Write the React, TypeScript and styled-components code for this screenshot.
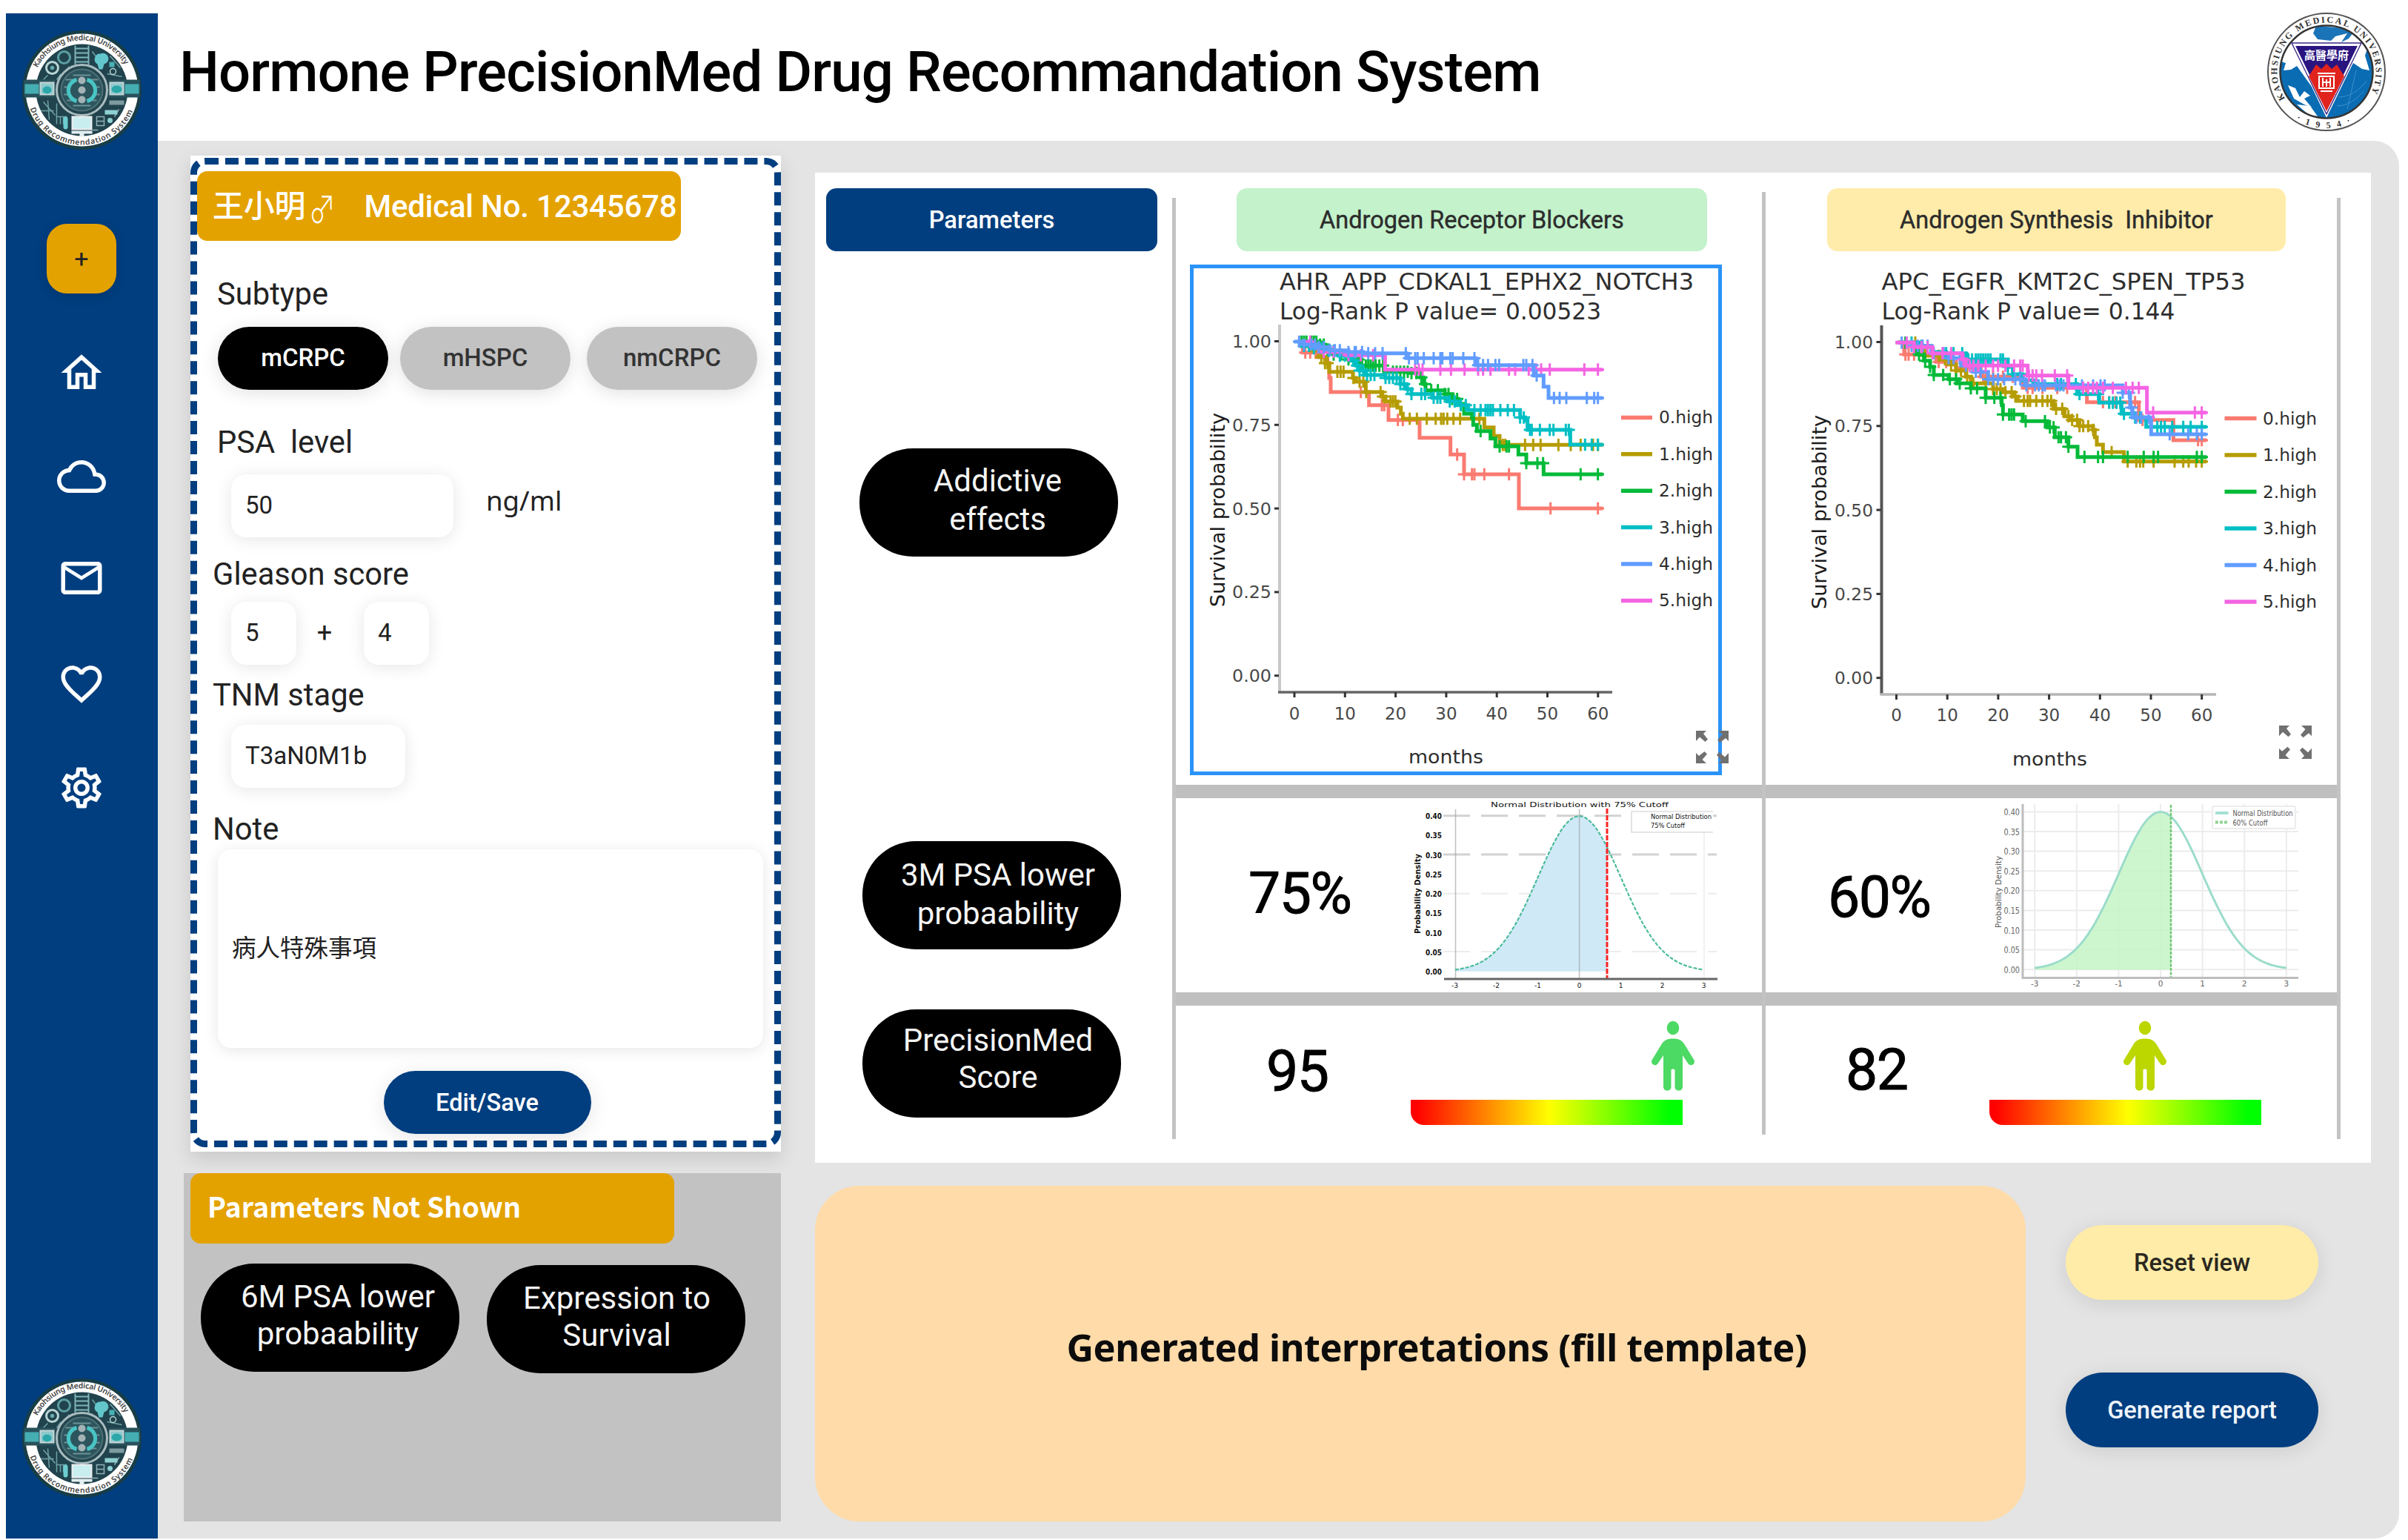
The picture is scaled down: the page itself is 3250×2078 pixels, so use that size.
import React from "react";
import styled, { createGlobalStyle } from "styled-components";
import {
  MdOutlineHome,
  MdOutlineCloud,
  MdMailOutline,
  MdFavoriteBorder,
  MdOutlineSettings,
} from "react-icons/md";

const navy = "#003e7f";
const amber = "#e4a200";
const grey = "#c2c2c2";
const roboto = `Roboto, "Noto Sans CJK TC", sans-serif`;
const noto = `"Noto Sans", "Noto Sans CJK TC", sans-serif`;

const GlobalStyle = createGlobalStyle`
  * { box-sizing: border-box; }
  body { margin: 0; background: #fff; font-family: ${roboto}; color: #222; }
  button, input { font-family: inherit; border: 0; padding: 0; }
`;

const Page = styled.div`
  width: 3250px;
  height: 2078px;
  padding: 18px 12px 2px 8px;
  display: flex;
  overflow: hidden;
`;

const Sidebar = styled.nav`
  width: 205px;
  height: 2058px;
  background: ${navy};
  display: flex;
  flex-direction: column;
  align-items: center;
  padding: 22px 0 54px;
`;

const AddButton = styled.button`
  margin: 99px 1px 0 0;
  width: 94px;
  height: 94px;
  border-radius: 27px;
  background: ${amber};
  font-size: 34px;
  line-height: 90px;
  color: #222;
  box-shadow: 0 4px 16px rgba(0, 0, 0, 0.12);
`;

const NavIcons = styled.div`
  flex: 1;
  display: flex;
  flex-direction: column;
  align-items: center;
  padding: 74px 2px 0 0;
  gap: 74px;
  color: #fff;
  svg {
    width: 66px;
    height: 66px;
  }
  svg:nth-child(3) {
    margin: -3px 0 3px;
  }
`;

const Main = styled.div`
  width: 3025px;
  display: flex;
  flex-direction: column;
`;

const Header = styled.header`
  height: 172px;
  display: flex;
  justify-content: space-between;
  padding: 0 16px 0 29px;
  & > svg {
    margin-top: -3px;
  }
`;

const Title = styled.h1`
  margin: 33px 0 0;
  font-size: 76px;
  line-height: 92px;
  font-weight: 500;
  letter-spacing: -0.85px;
  color: #000;
  white-space: nowrap;
`;

const Workspace = styled.div`
  height: 1886px;
  border-radius: 0 34px 34px 0;
  background: #e4e4e4;
  display: flex;
  padding: 20px 38px 23px 35px;
`;

const LeftColumn = styled.div`
  width: 806px;
  display: flex;
  flex-direction: column;
  justify-content: space-between;
`;

const Card = styled.section`
  margin-left: 9px;
  width: 797px;
  height: 1344px;
  padding: 3px 0 6px;
  background: #fff;
  box-shadow: 0 10px 24px rgba(0, 0, 0, 0.12);
`;

const CardBody = styled.div`
  height: 1335px;
  border: 9px dashed ${navy};
  border-radius: 20px;
  display: flex;
  flex-direction: column;
  align-items: flex-start;
`;

const Badge = styled.div`
  width: 653px;
  height: 94px;
  border-radius: 14px;
  background: ${amber};
  color: #fff;
  display: flex;
  align-items: center;
  white-space: nowrap;
`;

const PatientBadge = styled(Badge)`
  margin-top: 9px;
  padding: 2px 0 0 21px;
  font-size: 42px;
  font-weight: 500;
  line-height: 48px;
  letter-spacing: -0.2px;
`;

const Sex = styled.span`
  width: 40px;
  margin: 2px 37px 0 2px;
  font-family: "Noto Sans CJK TC", sans-serif;
  font-weight: 300;
  text-align: center;
  transform: scale(0.86, 1.18);
`;

const FieldLabel = styled.div<{ $top: number; $left?: number }>`
  margin-top: ${(p) => p.$top}px;
  margin-left: ${(p) => p.$left ?? 21}px;
  font-size: 41.7px;
  line-height: 48px;
  white-space: pre;
`;

const Row = styled.div<{ $top: number; $left: number }>`
  margin-top: ${(p) => p.$top}px;
  margin-left: ${(p) => p.$left}px;
  height: 85px;
  display: flex;
  align-items: center;
`;

const Chip = styled.button<{ $active?: boolean; $gap?: number }>`
  width: 230px;
  height: 85px;
  margin-left: ${(p) => p.$gap ?? 0}px;
  padding-bottom: 2px;
  border-radius: 43px;
  background: ${(p) => (p.$active ? "#000" : grey)};
  color: ${(p) => (p.$active ? "#fff" : "#333")};
  font-size: 33px;
  font-weight: 500;
  box-shadow: 0 4px 24px rgba(0, 0, 0, 0.12);
`;

const Input = styled.div<{ $w: number }>`
  width: ${(p) => p.$w}px;
  height: 85px;
  padding-left: 19px;
  border-radius: 20px;
  background: #fff;
  font-size: 33px;
  line-height: 84px;
  box-shadow: 0 3px 22px rgba(0, 0, 0, 0.1);
`;

const Unit = styled.span`
  margin: 0 0 16px 44px;
  font-family: ${noto};
  font-size: 36.6px;
  line-height: 48px;
`;

const Plus = styled.span`
  width: 76px;
  margin-right: 15px;
  text-align: center;
  font-size: 36px;
  line-height: 77px;
`;

const NoteBox = styled.div`
  margin: 3px 0 0 28px;
  width: 736px;
  height: 268px;
  padding-left: 19px;
  border-radius: 18px;
  box-shadow: 0 3px 20px rgba(0, 0, 0, 0.1);
  font-size: 32.5px;
  line-height: 268px;
`;

const ActionButton = styled.button<{ $w: number; $h: number; $bg: string; $fg: string }>`
  width: ${(p) => p.$w}px;
  height: ${(p) => p.$h}px;
  padding-top: 1px;
  border-radius: ${(p) => p.$h / 2}px;
  background: ${(p) => p.$bg};
  color: ${(p) => p.$fg};
  font-size: 32.6px;
  font-weight: 500;
  box-shadow: 0 5px 28px rgba(0, 0, 0, 0.1);
`;

const SaveRow = styled.div`
  align-self: center;
  margin: 31px 0 0 4px;
`;

const HiddenPanel = styled.section`
  height: 470px;
  background: ${grey};
  padding-left: 9px;
`;

const HiddenBadge = styled(Badge)`
  height: 95px;
  padding: 0 0 8px 23px;
  font-family: "Noto Sans CJK TC", sans-serif;
  font-size: 37.6px;
  font-weight: 700;
`;

const HiddenPills = styled.div`
  display: flex;
  gap: 37px;
  margin: 27px 0 0 14px;
`;

const Pill = styled.div<{ $top?: number; $left?: number; $shift?: number; $lift?: number; $lh?: number }>`
  width: 349px;
  height: 146px;
  margin-top: ${(p) => p.$top ?? 0}px;
  margin-left: ${(p) => p.$left ?? 0}px;
  padding: ${(p) => p.$lift ?? 20}px 0 0 ${(p) => p.$shift ?? 0}px;
  border-radius: 72px;
  background: #000;
  color: #f5f5f5;
  font-size: 42px;
  line-height: ${(p) => p.$lh ?? 50}px;
  text-align: center;
  white-space: pre;
`;

const RightColumn = styled.div`
  width: 2101px;
  margin: 23px 0 0 46px;
  display: flex;
  flex-direction: column;
  justify-content: space-between;
`;

const Matrix = styled.section`
  height: 1336px;
  background: #fff;
  display: flex;
`;

const ParamColumn = styled.div`
  width: 482px;
  padding: 21px 0 0 15px;
`;

const HeadCell = styled.div<{ $w: number; $bg: string; $fg?: string }>`
  width: ${(p) => p.$w}px;
  height: 85px;
  border-radius: 14px;
  background: ${(p) => p.$bg};
  color: ${(p) => p.$fg ?? "#2c2c2c"};
  font-size: ${(p) => (p.$fg ? 32.7 : 32.5)}px;
  font-weight: ${(p) => (p.$fg ? 500 : 400)};
  -webkit-text-stroke: ${(p) => (p.$fg ? 0 : 0.4)}px currentColor;
  line-height: 86px;
  text-align: center;
  white-space: pre;
`;

const Rule = styled.div<{ $top: number; $bottom: number }>`
  width: 5px;
  margin: ${(p) => p.$top}px 0 ${(p) => p.$bottom}px;
  background: #c3c3c3;
`;

const DrugColumn = styled.div<{ $w: number }>`
  width: ${(p) => p.$w}px;
  display: flex;
  flex-direction: column;
  padding-top: 21px;
`;

const HeadSlot = styled.div<{ $left: number }>`
  padding-left: ${(p) => p.$left}px;
  height: 103px;
`;

const ChartFrame = styled.div<{ $left: number; $selected?: boolean }>`
  width: 718px;
  height: 689px;
  margin-left: ${(p) => p.$left}px;
  border: 5px solid ${(p) => (p.$selected ? "#2b93f8" : "transparent")};
  svg {
    display: block;
    overflow: visible;
  }
`;

const Divider = styled.div<{ $top?: number }>`
  height: 18px;
  margin-top: ${(p) => p.$top ?? 0}px;
  background: #bfbfbf;
`;

const ProbabilityRow = styled.div`
  height: 262px;
  display: flex;
  justify-content: space-between;
  overflow: hidden;
`;

const DensitySlot = styled.div<{ $right: number }>`
  width: 430px;
  margin-right: ${(p) => p.$right}px;
`;

const Figure = styled.div<{ $left: number; $top: number }>`
  margin: ${(p) => p.$top}px 0 0 ${(p) => p.$left}px;
  height: 90px;
  font-size: 77px;
  line-height: 90px;
  letter-spacing: -1.5px;
  color: #000;
  -webkit-text-stroke: 1px #000;
`;

const ScoreRow = styled.div`
  height: 190px;
  display: flex;
`;

const Gauge = styled.div<{ $left: number }>`
  margin-left: ${(p) => p.$left}px;
  width: 367px;
  padding-top: 21px;
`;

const Marker = styled.div<{ $offset: number }>`
  height: 106px;
  padding-left: ${(p) => p.$offset}px;
  svg {
    display: block;
    overflow: visible;
  }
`;

const GaugeBar = styled.div`
  height: 34px;
  border-bottom-left-radius: 18px;
  background: linear-gradient(90deg, #f00 2%, #ff0 51%, #0f0 95%);
`;

const BottomRow = styled.div`
  display: flex;
  height: 453px;
`;

const Interpretation = styled.div`
  width: 1634px;
  height: 453px;
  border-radius: 60px;
  background: #ffdba9;
  display: flex;
  align-items: center;
  justify-content: center;
  padding: 0 0 18px 44px;
  font-family: ${noto};
  font-weight: 700;
  font-size: 50.5px;
  letter-spacing: -0.5px;
  color: #0c0c0c;
  white-space: nowrap;
`;

const Actions = styled.div`
  margin: 53px 0 0 54px;
  display: flex;
  flex-direction: column;
  gap: 98px;
`;

type Step = [number, number];
type Curve = { color: string; start: Step; steps: Step[]; ticks: number[] };

const colors = ["#fb7a70", "#b59c00", "#00ba38", "#00bfc4", "#619cff", "#f564e3"];

const blockerCurves: Curve[] = [
  {
    color: colors[0],
    start: [95, 93],
    steps: [[115, 137], [170, 155], [215, 180], [222, 240], [228, 297], [383, 350], [462, 410], [588, 482], [713, 550], [768, 630], [990, 768]],
    ticks: [125, 145, 350, 435, 445, 500, 520, 740, 768, 800, 810, 850, 950, 1118, 1310],
  },
  {
    color: colors[1],
    start: [95, 93],
    steps: [[110, 110], [150, 130], [180, 155], [205, 180], [222, 215], [318, 240], [330, 255], [370, 297], [435, 315], [450, 335], [498, 360], [512, 385], [520, 405], [850, 440], [888, 475], [912, 500], [925, 511]],
    ticks: [190, 205, 215, 255, 268, 280, 320, 345, 360, 372, 430, 440, 470, 480, 490, 548, 577, 617, 653, 675, 685, 700, 725, 752, 830, 925, 935, 1015, 1048, 1078, 1150, 1200, 1240, 1290, 1310],
  },
  {
    color: colors[2],
    start: [95, 93],
    steps: [[175, 105], [205, 125], [240, 145], [300, 165], [350, 190], [445, 215], [545, 220], [590, 238], [603, 265], [612, 290], [690, 305], [720, 325], [745, 345], [768, 385], [800, 400], [805, 430], [820, 455], [875, 485], [895, 517], [988, 550], [1020, 585], [1090, 630]],
    ticks: [110, 120, 130, 150, 160, 170, 185, 200, 215, 240, 270, 300, 320, 340, 355, 370, 380, 390, 400, 410, 425, 440, 480, 495, 510, 525, 540, 555, 575, 595, 610, 635, 662, 690, 705, 720, 740, 755, 835, 912, 940, 950, 1020, 1065, 1088, 1240, 1310],
  },
  {
    color: colors[3],
    start: [95, 93],
    steps: [[110, 110], [150, 120], [210, 130], [260, 150], [310, 170], [330, 190], [345, 210], [370, 228], [450, 240], [510, 265], [535, 285], [555, 305], [640, 320], [700, 335], [740, 350], [785, 370], [995, 400], [1015, 412], [1025, 450], [1198, 510]],
    ticks: [120, 140, 160, 190, 220, 240, 265, 285, 300, 320, 335, 345, 360, 375, 390, 405, 450, 465, 480, 495, 510, 525, 540, 555, 595, 610, 645, 660, 672, 710, 730, 755, 775, 810, 835, 855, 865, 875, 885, 915, 945, 970, 995, 1010, 1035, 1042, 1075, 1115, 1130, 1180, 1192, 1258, 1285, 1310],
  },
  {
    color: colors[5],
    start: [95, 93],
    steps: [[150, 110], [180, 135], [290, 148], [448, 206]],
    ticks: [145, 200, 240, 300, 350, 400, 570, 585, 600, 672, 715, 770, 825, 845, 875, 950, 975, 1030, 1060, 1080, 1115, 1255, 1310],
  },
  {
    color: colors[4],
    start: [80, 93],
    steps: [[120, 105], [170, 115], [225, 128], [300, 135], [360, 140], [535, 160], [815, 188], [1050, 230], [1090, 275], [1110, 321]],
    ticks: [100, 120, 150, 165, 180, 200, 225, 245, 265, 300, 325, 330, 355, 380, 408, 438, 532, 545, 570, 580, 605, 645, 672, 680, 712, 722, 765, 810, 825, 845, 865, 895, 910, 1008, 1020, 1045, 1062, 1132, 1155, 1182, 1265, 1295, 1310],
  },
];

const inhibitorCurves: Curve[] = [
  {
    color: colors[0],
    start: [95, 97],
    steps: [[120, 145], [250, 175], [330, 200], [430, 235], [600, 280], [860, 338], [1070, 410], [1210, 492]],
    ticks: [125, 138, 160, 205, 260, 290, 350, 440, 450, 480, 520, 560, 620, 640, 680, 740, 780, 925, 950, 975, 1035, 1055, 1085, 1310, 1325],
  },
  {
    color: colors[1],
    start: [95, 97],
    steps: [[175, 110], [200, 150], [270, 165], [300, 185], [330, 210], [370, 235], [390, 262], [480, 285], [520, 298], [560, 315], [580, 333], [725, 365], [770, 395], [790, 410], [830, 435], [885, 450], [892, 480], [900, 510], [925, 540], [1010, 578]],
    ticks: [130, 165, 205, 260, 285, 310, 330, 350, 375, 400, 450, 480, 495, 510, 530, 555, 570, 605, 620, 630, 655, 680, 700, 715, 735, 760, 785, 800, 820, 830, 845, 865, 885, 960, 1025, 1060, 1075, 1088, 1130, 1215, 1250, 1272, 1302, 1325],
  },
  {
    color: colors[2],
    start: [95, 97],
    steps: [[170, 145], [200, 170], [225, 195], [240, 228], [300, 245], [340, 262], [390, 282], [450, 320], [515, 350], [520, 388], [600, 415], [700, 440], [730, 480], [785, 518], [822, 560]],
    ticks: [125, 180, 205, 225, 240, 278, 305, 330, 345, 390, 415, 450, 485, 510, 520, 545, 555, 565, 612, 690, 710, 725, 745, 755, 775, 785, 850, 905, 925, 1025, 1090, 1130, 1148, 1305, 1325],
  },
  {
    color: colors[3],
    start: [95, 97],
    steps: [[180, 110], [230, 135], [290, 140], [370, 165], [540, 195], [560, 225], [600, 250], [650, 265], [820, 305], [910, 340], [1000, 385], [1050, 400], [1100, 438]],
    ticks: [150, 190, 290, 320, 355, 380, 395, 410, 420, 430, 440, 450, 460, 470, 510, 520, 540, 560, 590, 640, 740, 755, 815, 830, 905, 950, 965, 980, 995, 1010, 1055, 1075, 1145, 1160, 1175, 1205, 1250, 1280, 1325],
  },
  {
    color: colors[4],
    start: [95, 97],
    steps: [[150, 110], [230, 140], [300, 160], [350, 190], [400, 215], [460, 245], [610, 270], [1005, 300], [1035, 360], [1045, 400], [1120, 468]],
    ticks: [110, 130, 150, 175, 195, 215, 240, 280, 300, 320, 345, 370, 410, 430, 460, 480, 500, 525, 570, 590, 615, 650, 665, 680, 690, 735, 750, 765, 840, 885, 915, 932, 1005, 1030, 1040, 1060, 1080, 1110, 1195, 1270, 1305, 1325],
  },
  {
    color: colors[5],
    start: [85, 97],
    steps: [[160, 115], [235, 140], [355, 165], [370, 190], [620, 230], [785, 280], [1103, 380]],
    ticks: [130, 160, 190, 215, 235, 275, 310, 360, 385, 400, 420, 450, 480, 500, 530, 565, 590, 600, 625, 640, 655, 678, 730, 780, 845, 865, 885, 900, 925, 965, 1018, 1045, 1070, 1128, 1297, 1325],
  },
];

function curvePath(c: Curve, end: number) {
  let d = `M${c.start[0]} ${c.start[1]}`;
  c.steps.forEach(([x, y]) => (d += `H${x}V${y}`));
  return d + `H${end}`;
}

function tickPath(c: Curve) {
  return c.ticks
    .map((x) => {
      let y = c.start[1];
      c.steps.forEach(([sx, sy]) => {
        if (x >= sx) y = sy;
      });
      return `M${x} ${y - 25}V${y + 25}M${x - 25} ${y}H${x + 25}`;
    })
    .join("");
}

type SurvivalProps = {
  view: string;
  title: string;
  titleWidth: number;
  subtitle: string;
  subtitleWidth: number;
  axisX: number;
  axisTop: number;
  axisY: number;
  axisRight: number;
  axisColors: [string, string];
  x0: number;
  dx: number;
  y0: number;
  dy: number;
  tickBase: number;
  labelLeft: number;
  labelWidth: number;
  months: [number, number, number];
  yLabel: [number, number, number];
  legend: { x: number; w: number; y: number; dy: number; tx: number; tw: number };
  origin: [number, number];
  curveEnd: number;
  curves: Curve[];
  expand: [number, number, number, number];
};

function SurvivalChart(p: SurvivalProps) {
  return (
    <svg width={708} height={679} viewBox={p.view} fontFamily='"DejaVu Sans", sans-serif' fill="#2e2e2e">
      <text x={p.axisX} y={391} fontSize={32} textLength={p.titleWidth} lengthAdjust="spacingAndGlyphs">{p.title}</text>
      <text x={p.axisX} y={431} fontSize={32} textLength={p.subtitleWidth} lengthAdjust="spacingAndGlyphs">{p.subtitle}</text>
      <path d={`M${p.axisX} ${p.axisTop}V${p.axisY}`} stroke={p.axisColors[0]} strokeWidth={4} />
      <path d={`M${p.axisX - 2} ${p.axisY}H${p.axisRight}`} stroke={p.axisColors[1]} strokeWidth={3.5} />
      {["1.00", "0.75", "0.50", "0.25", "0.00"].map((t, i) => {
        const y = p.y0 + p.dy * i;
        return (
          <g key={t}>
            <path d={`M${p.axisX - 7} ${y}h6`} stroke="#333" strokeWidth={3} />
            <text x={p.labelLeft} y={y + 8.5} fontSize={23.5} fill="#484848" textLength={p.labelWidth} lengthAdjust="spacingAndGlyphs">{t}</text>
          </g>
        );
      })}
      {[0, 10, 20, 30, 40, 50, 60].map((t, i) => {
        const x = p.x0 + p.dx * i;
        return (
          <g key={t}>
            <path d={`M${x} ${p.axisY}v7`} stroke="#333" strokeWidth={3} />
            <text x={x} y={p.tickBase} fontSize={23} fill="#484848" textAnchor="middle">{t}</text>
          </g>
        );
      })}
      <text x={p.months[0]} y={p.months[1]} fontSize={25} textLength={p.months[2]} lengthAdjust="spacingAndGlyphs">months</text>
      <text transform={`translate(${p.yLabel[0]} ${p.yLabel[1]}) rotate(-90)`} fontSize={26} fill="#1c1c1c" textLength={p.yLabel[2]} lengthAdjust="spacingAndGlyphs">Survival probability</text>
      <g transform={`translate(${p.origin[0]} ${p.origin[1]}) scale(0.33333)`} fill="none">
        {p.curves.map((c) => (
          <g key={c.color} stroke={c.color}>
            <path d={curvePath(c, p.curveEnd)} strokeWidth={15} />
            <path d={tickPath(c)} strokeWidth={9} />
          </g>
        ))}
      </g>
      {colors.map((c, i) => (
        <g key={c}>
          <path d={`M${p.legend.x} ${p.legend.y + p.legend.dy * i}h${p.legend.w}`} stroke={c} strokeWidth={5.5} />
          <text x={p.legend.tx} y={p.legend.y + p.legend.dy * i + 8} fontSize={23.5} textLength={p.legend.tw} lengthAdjust="spacingAndGlyphs">{`${i}.high`}</text>
        </g>
      ))}
      <svg x={p.expand[0]} y={p.expand[1]} width={p.expand[2]} height={p.expand[3]} viewBox="0 0 44 44" preserveAspectRatio="none">
        <g fill="#707070">
          {[0, 90, 180, 270].map((a) => (
            <path key={a} transform={`rotate(${a} 22 22)`} d="M0 0H14L10 4L16 11.5L12.500 15L5 8.500L0 14Z" />
          ))}
        </g>
      </svg>
    </svg>
  );
}

function bell(cx: number, base: number, height: number, sigma: number, from: number, to: number) {
  const pts: string[] = [];
  for (let i = 0; i <= 80; i++) {
    const z = from + ((to - from) * i) / 80;
    pts.push(`${(cx + z * sigma).toFixed(1)} ${(base - height * Math.exp((-z * z) / 2)).toFixed(1)}`);
  }
  return "M" + pts.join("L");
}

const densities = ["0.40", "0.35", "0.30", "0.25", "0.20", "0.15", "0.10", "0.05", "0.00"];

function BlockerDensity() {
  return (
    <svg width={430} height={262} viewBox="1900 1077 430 262" fontFamily='"DejaVu Sans", sans-serif' fill="#111">
      <text x={2012} y={1089} fontSize={9} textLength={240} lengthAdjust="spacingAndGlyphs">Normal Distribution with 75% Cutoff</text>
      {[1100.7, 1153, 1205.7, 1284].map((y, i) => (
        <path key={y} d={`M1948 ${y}H2317`} stroke={i < 2 ? "#d2d2d2" : "#ececec"} strokeWidth={i < 2 ? 3 : 2} strokeDasharray="36 15" />
      ))}
      <path d={bell(2131.6, 1310.7, 209.5, 55.9, -3, 0.674) + "V1310.7H1964Z"} fill="#cfe9f7" />
      <path d="M1964.5 1092V1321M2131.6 1092V1321" stroke="#999" strokeOpacity={0.6} strokeWidth={1.6} />
      <path d="M2300 1124V1321" stroke="#eee" strokeWidth={1.6} />
      <path d={bell(2131.6, 1310.7, 209.5, 55.9, -3, 3)} fill="none" stroke="#4dbb9c" strokeWidth={2.2} strokeDasharray="5 2" />
      <path d="M2169 1091V1321" stroke="#f22" strokeWidth={3} strokeDasharray="7 2" />
      <path d="M1949 1321H2318" stroke="#666" strokeWidth={3} />
      {densities.map((t, i) => (
        <text key={t} x={1924} y={1105 + 26.25 * i} fontSize={11} fontWeight={700} textLength={22} lengthAdjust="spacingAndGlyphs">{t}</text>
      ))}
      {[-3, -2, -1, 0, 1, 2, 3].map((t) => (
        <text key={t} x={2131.6 + t * 56} y={1333} fontSize={9} textAnchor="middle">{t}</text>
      ))}
      <text transform="translate(1917 1260) rotate(-90)" fontSize={11} fontWeight={700} textLength={108} lengthAdjust="spacingAndGlyphs">Probability Density</text>
      <path d="M2312 1095H2202V1123H2312" fill="#fff" stroke="#ddd" strokeWidth={1.6} />
      <text x={2228} y={1105} fontSize={9} textLength={82} lengthAdjust="spacingAndGlyphs">Normal Distribution</text>
      <text x={2228} y={1117} fontSize={9} textLength={46} lengthAdjust="spacingAndGlyphs">75% Cutoff</text>
    </svg>
  );
}

function InhibitorDensity() {
  return (
    <svg width={430} height={262} viewBox="2685 1077 430 262" fontFamily='"DejaVu Sans", sans-serif' fill="#555">
      {densities.map((t, i) => (
        <g key={t}>
          <path d={`M2730 ${1095.4 + 26.6 * i}H3102`} stroke="#ececec" strokeWidth={2} />
          <text x={2704.5} y={1100 + 26.6 * i} fontSize={12} fill="#666" textLength={21.5} lengthAdjust="spacingAndGlyphs">{t}</text>
        </g>
      ))}
      {[-3, -2, -1, 0, 1, 2, 3].map((t) => (
        <g key={t}>
          <path d={`M${2916 + 56.6 * t} 1085V1319`} stroke="#ececec" strokeWidth={2} />
          <text x={2916 + 56.6 * t} y={1331} fontSize={10.5} fill="#666" textAnchor="middle">{t}</text>
        </g>
      ))}
      <path d={bell(2916, 1308.5, 213, 56.6, -3, 0.25) + "V1308.5H2746Z"} fill="#c5f4c5" fillOpacity={0.85} />
      <path d={bell(2916, 1308.5, 213, 56.6, -3, 3)} fill="none" stroke="#9cdccb" strokeWidth={3} />
      <path d="M2930 1086V1319" stroke="#6fc878" strokeWidth={2.5} strokeDasharray="4 1.5" />
      <path d="M2730 1085V1319.5H3102" fill="none" stroke="#bdbdbd" strokeWidth={3} />
      <text transform="translate(2701 1252) rotate(-90)" fontSize={11} textLength={97} lengthAdjust="spacingAndGlyphs">Probability Density</text>
      <rect x={2986} y={1088} width={112} height={30} rx={2} fill="#fff" stroke="#ececec" strokeWidth={2} />
      <path d="M2990 1097H3007.5" stroke="#a6e0d4" strokeWidth={4} />
      <path d="M2990 1109.6H3007.5" stroke="#8fd496" strokeWidth={4} strokeDasharray="4 2" />
      <text x={3013.5} y={1101} fontSize={10} textLength={81} lengthAdjust="spacingAndGlyphs">Normal Distribution</text>
      <text x={3013.5} y={1113.5} fontSize={10} textLength={47} lengthAdjust="spacingAndGlyphs">60% Cutoff</text>
    </svg>
  );
}

function Person({ color }: { color: string }) {
  return (
    <svg width={58} height={94} viewBox="0 0 58 94" fill={color}>
      <ellipse cx={29} cy={9} rx={8.3} ry={9.2} />
      <path d="M29 23.5C37 23.5 42 26 45 32L57.5 52.5C59 56 56.5 59 53.5 59.3C51.5 59.5 50.5 58.5 49 56.5L42 46V88C42 91.5 40 93.5 37 93.5C33.5 93.5 31.5 92 31.5 88V66C31.5 64 26.5 64 26.5 66V88C26.5 92 24.5 93.5 21 93.5C18 93.5 16 91.5 16 88V46L9 56.5C7.5 58.5 6.5 59.5 4.5 59.3C1.5 59 -1 56 .5 52.5L13 32C16 26 21 23.5 29 23.5Z" />
    </svg>
  );
}

function UniversitySeal() {
  return (
    <svg width={164} height={164} viewBox="-82 -82 164 164">
      <defs>
        <clipPath id="globe"><circle r={62} /></clipPath>
        <path id="sealTop" d="M-56 36A66.600 66.600 0 1 1 56 36" />
        <path id="sealBottom" d="M-40 64.500A76 76 0 0 0 40 64.500" />
      </defs>
      <circle r={79} fill="#fff" stroke="#555" strokeWidth={2} />
      <g clipPath="url(#globe)">
        <circle r={62} fill="#fff" />
        <path d="M-14 -62L40 -58L30 -45L20 -40L28 -52L12 -48L6 -42L-12 -44L-18 -52Z" fill="#1b74b8" />
        <path d="M-62 -14L-55 -12L-58 -2L-48 -3L-40 -8L-20 20L0 62H-62Z" fill="#0a6cb3" />
        <path d="M0 62L30 0L36 -12L48 -4L58 -2L52 -22L56 -34L66 -20V62Z" fill="#0a6cb3" />
        <path d="M-52 18L-42 22L-36 34L-30 26L-22 32L-30 36L-20 48L-30 44L-44 36Z" fill="#fff" />
        <path d="M-40 44L-22 46L-12 60L-24 58Z" fill="#fff" />
        <path d="M16 34C30 34 44 26 54 12M14 46C28 46 40 38 50 26M40 -2L28 50" stroke="#3d8fca" fill="none" />
      </g>
      <circle r={62.5} fill="none" stroke="#333" strokeWidth={2.5} />
      <path d="M-47 -39H47L0 57Z" fill="#fff" stroke="#3b2a86" strokeWidth={1.5} strokeLinejoin="round" />
      <path d="M-43 -35H43L0 52Z" fill="#2a1580" />
      <path d="M-43 -35L-25 2L0 52L25 2L43 -35" fill="none" stroke="#fff" strokeWidth={2} />
      <path d="M-24 6L-14 -10L-7 -4L0 -11L7 -4L14 -10L24 6L0 53Z" fill="#e0241d" />
      <text x={0} y={-17} fontSize={15} fill="#fff" textAnchor="middle" fontFamily='"Noto Sans CJK TC", sans-serif' fontWeight={700}>高醫學府</text>
      <path d="M-12 2H12M-10 6V22H10V6ZM-5 8V20M5 8V20M0 10V20M-5 14H5M-8 26H8" fill="none" stroke="#fff" strokeWidth={2} />
      <g fontFamily='"Liberation Serif", serif' fontSize={12} fontWeight={700} fill="#333">
        <text><textPath href="#sealTop" textLength={276}>KAOHSIUNG MEDICAL UNIVERSITY</textPath></text>
        <text><textPath href="#sealBottom" startOffset="50%" textAnchor="middle" letterSpacing={9}>·1954·</textPath></text>
      </g>
    </svg>
  );
}

function SystemSeal({ id }: { id: string }) {
  return (
    <svg width={163} height={163} viewBox="-81.5 -81.5 163 163">
      <defs>
        <clipPath id={`${id}c`}><circle r={62} /></clipPath>
        <path id={`${id}t`} d="M-60 -30A67 67 0 0 1 60 -30" />
        <path id={`${id}b`} d="M-70 25A74.5 74.5 0 0 0 70 25" />
      </defs>
      <circle r={80.5} fill="#183d45" />
      <circle r={76} fill="#fff" />
      <circle r={62} fill="#21434d" />
      <g clipPath={`url(#${id}c)`} fill="none" stroke="#6fa3a6" strokeWidth={1.5}>
        <path d="M-9 -60V-34M9 -60V-34M-9 -56H9M-9 -50H9M-9 -44H9M-9 -38H9" stroke="#7fb5b8" strokeWidth={2} />
        <circle cx={-40} cy={-30} r={8} stroke="#b8d4d4" strokeWidth={3} />
        <circle cx={-40} cy={-30} r={2} fill="#4cc0c2" />
        <circle cx={-24} cy={-44} r={8} stroke="#5b9ea3" strokeWidth={3} />
        <path d="M-52 -14L-46 -20M-34 -14L-28 -22M-18 -32V-24M14 -52L20 -44M38 -46L52 -30M34 -22L54 -18" />
        <circle cx={42} cy={-25} r={4} stroke="#b8d4d4" />
        <rect x={37} y={-38} width={7} height={7} fill="#49b2b5" stroke="none" />
        <path d="M-52 16L-36 34M-46 14L-44 40M-56 28H-38M-34 18V46M-29 36V46M-25 36V46M-35 36H-20" />
        <path d="M20 36H30V48H20ZM20 42H30M14 54H22M44 36L50 26" stroke="#8fb0b2" />
        <rect x={31} y={27} width={17} height={6} fill="#8ed1d3" stroke="none" />
        <rect x={37} y={14} width={20} height={6} fill="#7d9ba0" stroke="none" />
        <circle cx={38} cy={41} r={3.5} fill="#8ed1d3" stroke="none" />
        <rect x={-25} y={36} width={6} height={17} rx={3} fill="#6ccdd0" stroke="none" />
      </g>
      <path d="M25 -49A7.5 7.5 0 1 1 30 -35L28 -28H23L21 -35A7.5 7.5 0 0 1 25 -49Z" fill="#62c6cb" />
      <path d="M-78 -14H-36V10H-78A80 80 0 0 1 -78 -14ZM78 -14H36V10H78A80 80 0 0 0 78 -14Z" fill="#28525c" />
      <path d="M-77 -8H-58V5H-77ZM77 -8H58V5H77Z" fill="#45aeb2" />
      <path d="M-56 -10H-38V6H-56ZM56 -10H38V6H56Z" fill="#8cc9cd" stroke="#c5d5d6" strokeWidth={2} />
      <ellipse cx={-47} cy={0} rx={6} ry={5} fill="#2ba7a9" />
      <ellipse cx={47} cy={-1} rx={7} ry={5} fill="#2ba7a9" />
      <circle r={34} fill="#24464e" stroke="#a9bcc0" strokeWidth={3} />
      <circle r={28} fill="#2d555d" stroke="#4e7076" strokeWidth={2} />
      <path d="M-22 -14H-10M-24 -4H-18M-24 6H-18M-20 14H-8M10 -14H22M18 -4H24M18 6H24M8 14H20M-12 -20H12M-12 21H12" stroke="#6d9297" strokeWidth={2} />
      <path d="M-7 -14A15 15 0 0 0 -7 15M7 -14A15 15 0 0 1 7 15" fill="none" stroke="#49c4c4" strokeWidth={5} />
      <circle cy={-13} r={5} fill="#a4b3b6" />
      <circle r={5} fill="#a4b3b6" />
      <circle cy={13} r={5} fill="#a4b3b6" />
      <rect x={-13} y={36} width={26} height={17} fill="#c9eef0" stroke="#eee" strokeWidth={2} />
      <path d="M-14 55H14V59H-14ZM-3 59H3V63H-3Z" fill="#e2eef0" />
      <g fontFamily='"Noto Sans", sans-serif' fontSize={10.5} fontWeight={600} fill="#444">
        <text><textPath href={`#${id}t`} textLength={144}>Kaohsiung Medical University</textPath></text>
        <text><textPath href={`#${id}b`} textLength={178}>Drug Recommendation System</textPath></text>
      </g>
    </svg>
  );
}

export default function App() {
  return (
    <>
      <GlobalStyle />
      <Page>
        <Sidebar>
          <SystemSeal id="top" />
          <AddButton>+</AddButton>
          <NavIcons>
            <MdOutlineHome />
            <MdOutlineCloud />
            <MdMailOutline />
            <MdFavoriteBorder />
            <MdOutlineSettings />
          </NavIcons>
          <SystemSeal id="foot" />
        </Sidebar>
        <Main>
          <Header>
            <Title>Hormone PrecisionMed Drug Recommandation System</Title>
            <UniversitySeal />
          </Header>
          <Workspace>
            <LeftColumn>
              <Card>
                <CardBody>
                  <PatientBadge>
                    王小明<Sex>♂</Sex>Medical No. 12345678
                  </PatientBadge>
                  <FieldLabel $top={48} $left={27}>Subtype</FieldLabel>
                  <Row $top={20} $left={28}>
                    <Chip $active>mCRPC</Chip>
                    <Chip $gap={16}>mHSPC</Chip>
                    <Chip $gap={22}>nmCRPC</Chip>
                  </Row>
                  <FieldLabel $top={47} $left={27}>{"PSA  level"}</FieldLabel>
                  <Row $top={19} $left={46}>
                    <Input $w={300}>50</Input>
                    <Unit>ng/ml</Unit>
                  </Row>
                  <FieldLabel $top={26}>Gleason score</FieldLabel>
                  <Row $top={13} $left={46}>
                    <Input $w={88}>5</Input>
                    <Plus>+</Plus>
                    <Input $w={88}>4</Input>
                  </Row>
                  <FieldLabel $top={17}>TNM stage</FieldLabel>
                  <Row $top={16} $left={46}>
                    <Input $w={235}>T3aN0M1b</Input>
                  </Row>
                  <FieldLabel $top={32}>Note</FieldLabel>
                  <NoteBox>病人特殊事項</NoteBox>
                  <SaveRow>
                    <ActionButton $w={280} $h={85} $bg={navy} $fg="#fff">Edit/Save</ActionButton>
                  </SaveRow>
                </CardBody>
              </Card>
              <HiddenPanel>
                <HiddenBadge>Parameters Not Shown</HiddenBadge>
                <HiddenPills>
                  <Pill $shift={21}>{"6M PSA lower\nprobaability"}</Pill>
                  <Pill $top={2} $shift={2}>{"Expression to\nSurvival"}</Pill>
                </HiddenPills>
              </HiddenPanel>
            </LeftColumn>
            <RightColumn>
              <Matrix>
                <ParamColumn>
                  <HeadCell $w={447} $bg={navy} $fg="#fff">Parameters</HeadCell>
                  <Pill $top={266} $left={45} $shift={24} $lift={18} $lh={52}>{"Addictive\neffects"}</Pill>
                  <Pill $top={384} $left={49} $shift={17} $lh={52}>{"3M PSA lower\nprobaability"}</Pill>
                  <Pill $top={81} $left={49} $shift={17} $lift={17}>{"PrecisionMed\nScore"}</Pill>
                </ParamColumn>
                <Rule $top={34} $bottom={32} />
                <DrugColumn $w={791}>
                  <HeadSlot $left={82}>
                    <HeadCell $w={635} $bg="#c3f2cb">Androgen Receptor Blockers</HeadCell>
                  </HeadSlot>
                  <ChartFrame $left={19} $selected>
                    <SurvivalChart
                      view="1611 362 708 679"
                      title="AHR_APP_CDKAL1_EPHX2_NOTCH3"
                      titleWidth={559}
                      subtitle="Log-Rank P value= 0.00523"
                      subtitleWidth={434}
                      axisX={1727}
                      axisTop={438}
                      axisY={934}
                      axisRight={2176}
                      axisColors={["#c9c9c9", "#666"]}
                      x0={1747}
                      dx={68.3}
                      y0={460.5}
                      dy={112.8}
                      tickBase={971}
                      labelLeft={1663}
                      labelWidth={53}
                      months={[1901, 1030, 101]}
                      yLabel={[1653, 819, 262]}
                      legend={{ x: 2188, w: 42, y: 563.4, dy: 49.4, tx: 2239, tw: 73 }}
                      origin={[1720, 430]}
                      curveEnd={1330}
                      curves={blockerCurves}
                      expand={[2289, 986, 44, 44]}
                    />
                  </ChartFrame>
                  <Divider $top={13} />
                  <ProbabilityRow>
                    <Figure $left={98} $top={84}>75%</Figure>
                    <DensitySlot $right={48}><BlockerDensity /></DensitySlot>
                  </ProbabilityRow>
                  <Divider />
                  <ScoreRow>
                    <Figure $left={122} $top={44}>95</Figure>
                    <Gauge $left={111}>
                      <Marker $offset={325}><Person color="#4cd964" /></Marker>
                      <GaugeBar />
                    </Gauge>
                  </ScoreRow>
                </DrugColumn>
                <Rule $top={26} $bottom={38} />
                <DrugColumn $w={771}>
                  <HeadSlot $left={83}>
                    <HeadCell $w={619} $bg="#ffecaa">{"Androgen Synthesis  Inhibitor"}</HeadCell>
                  </HeadSlot>
                  <ChartFrame $left={33}>
                    <SurvivalChart
                      view="2421 362 708 679"
                      title="APC_EGFR_KMT2C_SPEN_TP53"
                      titleWidth={491}
                      subtitle="Log-Rank P value= 0.144"
                      subtitleWidth={396}
                      axisX={2539.5}
                      axisTop={439}
                      axisY={937}
                      axisRight={2991}
                      axisColors={["#555", "#b5b5b5"]}
                      x0={2559.5}
                      dx={68.7}
                      y0={461.5}
                      dy={113.3}
                      tickBase={973}
                      labelLeft={2476}
                      labelWidth={52}
                      months={[2716, 1033, 101]}
                      yLabel={[2465, 822, 262]}
                      legend={{ x: 3002.5, w: 43, y: 564.5, dy: 49.5, tx: 3054, tw: 73 }}
                      origin={[2530, 430]}
                      curveEnd={1345}
                      curves={inhibitorCurves}
                      expand={[3076, 979, 44, 45]}
                    />
                  </ChartFrame>
                  <Divider $top={13} />
                  <ProbabilityRow>
                    <Figure $left={84} $top={89}>60%</Figure>
                    <DensitySlot $right={39}><InhibitorDensity /></DensitySlot>
                  </ProbabilityRow>
                  <Divider />
                  <ScoreRow>
                    <Figure $left={108} $top={42}>82</Figure>
                    <Gauge $left={110}>
                      <Marker $offset={181}><Person color="#bcd600" /></Marker>
                      <GaugeBar />
                    </Gauge>
                  </ScoreRow>
                </DrugColumn>
                <Rule $top={34} $bottom={32} />
              </Matrix>
              <BottomRow>
                <Interpretation>Generated interpretations (fill template)</Interpretation>
                <Actions>
                  <ActionButton $w={341} $h={101} $bg="#ffeca8" $fg="#2b2820">Reset view</ActionButton>
                  <ActionButton $w={341} $h={101} $bg={navy} $fg="#f0f4fa">Generate report</ActionButton>
                </Actions>
              </BottomRow>
            </RightColumn>
          </Workspace>
        </Main>
      </Page>
    </>
  );
}
